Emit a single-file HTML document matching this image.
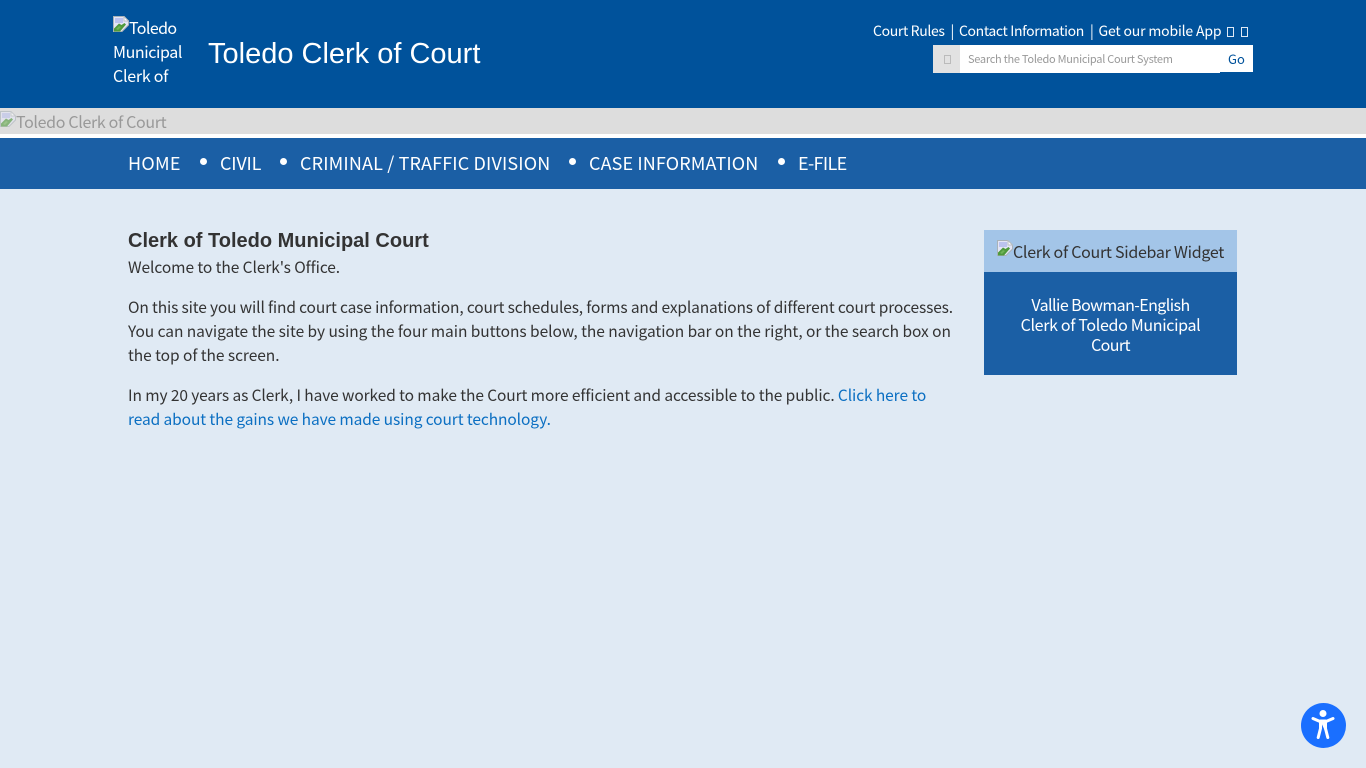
<!DOCTYPE html>
<html lang="en">
<head>
<meta charset="utf-8">
<title>Toledo Clerk of Court</title>
<style>
html,body{margin:0;padding:0;width:1366px;height:768px;overflow:hidden;background:#e0eaf4;}
body{position:relative;font-family:"Noto Sans CJK JP","Liberation Sans",sans-serif;color:#333;}
.t{position:absolute;white-space:nowrap;line-height:24px;height:24px;}
a{color:inherit;text-decoration:none;}
.box{position:absolute;}
.ic{position:absolute;width:16px;height:16px;}
.tofu{position:absolute;width:5px;height:8px;border:1px solid #dfe9f5;}
.dot{position:absolute;width:7px;height:7px;border-radius:50%;background:#fff;top:158px;}
.nav{color:#fff;font-size:18px;top:151px;}
.p{font-size:15.5px;color:#333;}
.top{color:#fff;font-size:14px;top:19px;}
.s{display:block;}
</style>
</head>
<body>
<svg width="0" height="0" style="position:absolute"><defs>
<symbol id="broken" viewBox="0 0 16 16">
<path d="M0.500 0.500H11L15.500 5V9L9 15.500H0.500Z" fill="#e4e6f6" stroke="#a9b2b8" stroke-width="1"/>
<path d="M11 0.500V5H15.500Z" fill="#fff" stroke="#b9bfc4" stroke-width="1"/>
<path d="M2 2H10V7H2Z" fill="#bcc3ef"/>
<path d="M1 15.500V12.500L6 7.500L8.500 9L11.500 7L13 8.500L7 15.500Z" fill="#4f9a3c"/>
<path d="M3 13L6 10L8 11L5 14Z" fill="#6fb356"/>
</symbol></defs></svg>

<header class="box" style="left:0;top:0;width:1366px;height:108px;background:#00529b"></header>
<svg class="ic" style="left:113px;top:16px"><use href="#broken"/></svg>
<div class="t" style="left:129px;top:15px;color:#fff;font-size:16px;letter-spacing:-.6px">Toledo</div>
<div class="t" style="left:113px;top:39px;color:#fff;font-size:16px;letter-spacing:-.4px">Municipal</div>
<div class="t" style="left:113px;top:63px;color:#fff;font-size:16px;letter-spacing:-.25px">Clerk of</div>
<div class="t" style="left:208px;top:36px;height:36px;line-height:36px;color:#fff;font-size:29px;font-family:'Liberation Sans',sans-serif">Toledo Clerk of Court</div>

<div class="t top" style="left:873px;letter-spacing:-.35px"><a href="#">Court Rules</a></div>
<div class="t top" style="left:950.500px">|</div>
<div class="t top" style="left:1090px">|</div>
<div class="t top" style="left:959px;letter-spacing:-.37px"><a href="#">Contact Information</a></div>
<div class="t top" style="left:1098.500px;letter-spacing:-.17px"><a href="#">Get our mobile App</a></div>
<div class="tofu" style="left:1227px;top:27px"></div>
<div class="tofu" style="left:1241px;top:27px"></div>

<div class="box" style="left:933px;top:45px;width:27px;height:28px;background:#e2e2e2"></div>
<div class="box" style="left:944px;top:55px;width:5px;height:7px;border:1px solid #bbb"></div>
<div class="box" style="left:960px;top:45px;width:260px;height:28px;background:#fff"></div>
<div class="t" style="left:968px;top:47px;color:#999;font-size:11px;letter-spacing:-.275px">Search the Toledo Municipal Court System</div>
<div class="box" style="left:1220px;top:45px;width:33px;height:27px;background:#fff"></div>
<div class="t" style="left:1228px;top:47px;color:#00529b;font-size:13px">Go</div>

<div class="box" style="left:0;top:108px;width:1366px;height:26px;background:#ddd"></div>
<svg class="ic" style="left:0;top:111px;opacity:.6"><use href="#broken"/></svg>
<div class="t" style="left:16px;top:109px;color:#999;font-size:16px;letter-spacing:-.33px">Toledo Clerk of Court</div>
<div class="box" style="left:0;top:134px;width:1366px;height:4px;background:#fff"></div>

<nav class="box" style="left:0;top:138px;width:1366px;height:51px;background:#1b5fa5"></nav>
<div class="t nav" style="left:128px;letter-spacing:.25px"><a href="#">HOME</a></div>
<div class="dot" style="left:200px"></div>
<div class="t nav" style="left:220px;letter-spacing:-.2px"><a href="#">CIVIL</a></div>
<div class="dot" style="left:280px"></div>
<div class="t nav" style="left:300px;letter-spacing:.15px"><a href="#">CRIMINAL / TRAFFIC DIVISION</a></div>
<div class="dot" style="left:569px"></div>
<div class="t nav" style="left:589px;letter-spacing:.12px"><a href="#">CASE INFORMATION</a></div>
<div class="dot" style="left:778px"></div>
<div class="t nav" style="left:798px;letter-spacing:-.65px"><a href="#">E-FILE</a></div>

<h1 class="t" style="margin:0;left:128px;top:229px;font-size:20px;font-weight:bold;color:#333;font-family:'Liberation Sans',sans-serif">Clerk of Toledo Municipal Court</h1>
<div class="t p" style="left:128px;top:255px;letter-spacing:-.07px">Welcome to the Clerk's Office.</div>
<div class="t p" style="left:128px;top:295px;letter-spacing:-.14px">On this site you will find court case information, court schedules, forms and explanations of different court processes.</div>
<div class="t p" style="left:128px;top:319px;letter-spacing:-.05px">You can navigate the site by using the four main buttons below, the navigation bar on the right, or the search box on</div>
<div class="t p" style="left:128px;top:343px;letter-spacing:-.05px">the top of the screen.</div>
<div class="t p" style="left:128px;top:383px;letter-spacing:-.09px">In my 20 years as Clerk, I have worked to make the Court more efficient and accessible to the public. <a href="#" style="color:#0b6fc2">Click here to</a></div>
<div class="t p" style="left:128px;top:407px;letter-spacing:-.09px"><a href="#" style="color:#0b6fc2">read about the gains we have made using court technology.</a></div>

<div class="box" style="left:984px;top:230px;width:253px;height:42px;background:#a3c5e8"></div>
<svg class="ic" style="left:997px;top:240px"><use href="#broken"/></svg>
<div class="t" style="left:1013px;top:239px;font-size:16px;color:#333;letter-spacing:-.28px">Clerk of Court Sidebar Widget</div>
<div class="box" style="left:984px;top:272px;width:253px;height:103px;background:#1b5fa5"></div>
<div class="box" style="left:984px;top:294px;width:253px;color:#fff;font-size:16px;line-height:20px;text-align:center">
<span class="s" style="letter-spacing:-.57px">Vallie Bowman-English</span>
<span class="s" style="letter-spacing:-.33px">Clerk of Toledo Municipal</span>
<span class="s" style="letter-spacing:-.6px">Court</span>
</div>

<div class="box" style="left:1301px;top:703px;width:45px;height:45px;border-radius:50%;background:#1a6fff"></div>
<svg class="box" style="left:1301px;top:703px" width="45" height="45" viewBox="0 0 45 45">
<circle cx="22" cy="10.500" r="3.500" fill="#fff"/>
<path d="M12 15.500L19 18.500H25L32 15.500" fill="none" stroke="#fff" stroke-width="3" stroke-linecap="round" stroke-linejoin="round"/>
<path d="M19.500 18H24.500V25.500L26.800 34.500M19.500 18V25.500L17.200 34.500" fill="#fff" stroke="#fff" stroke-width="3" stroke-linecap="round" stroke-linejoin="round"/>
</svg>
</body>
</html>
